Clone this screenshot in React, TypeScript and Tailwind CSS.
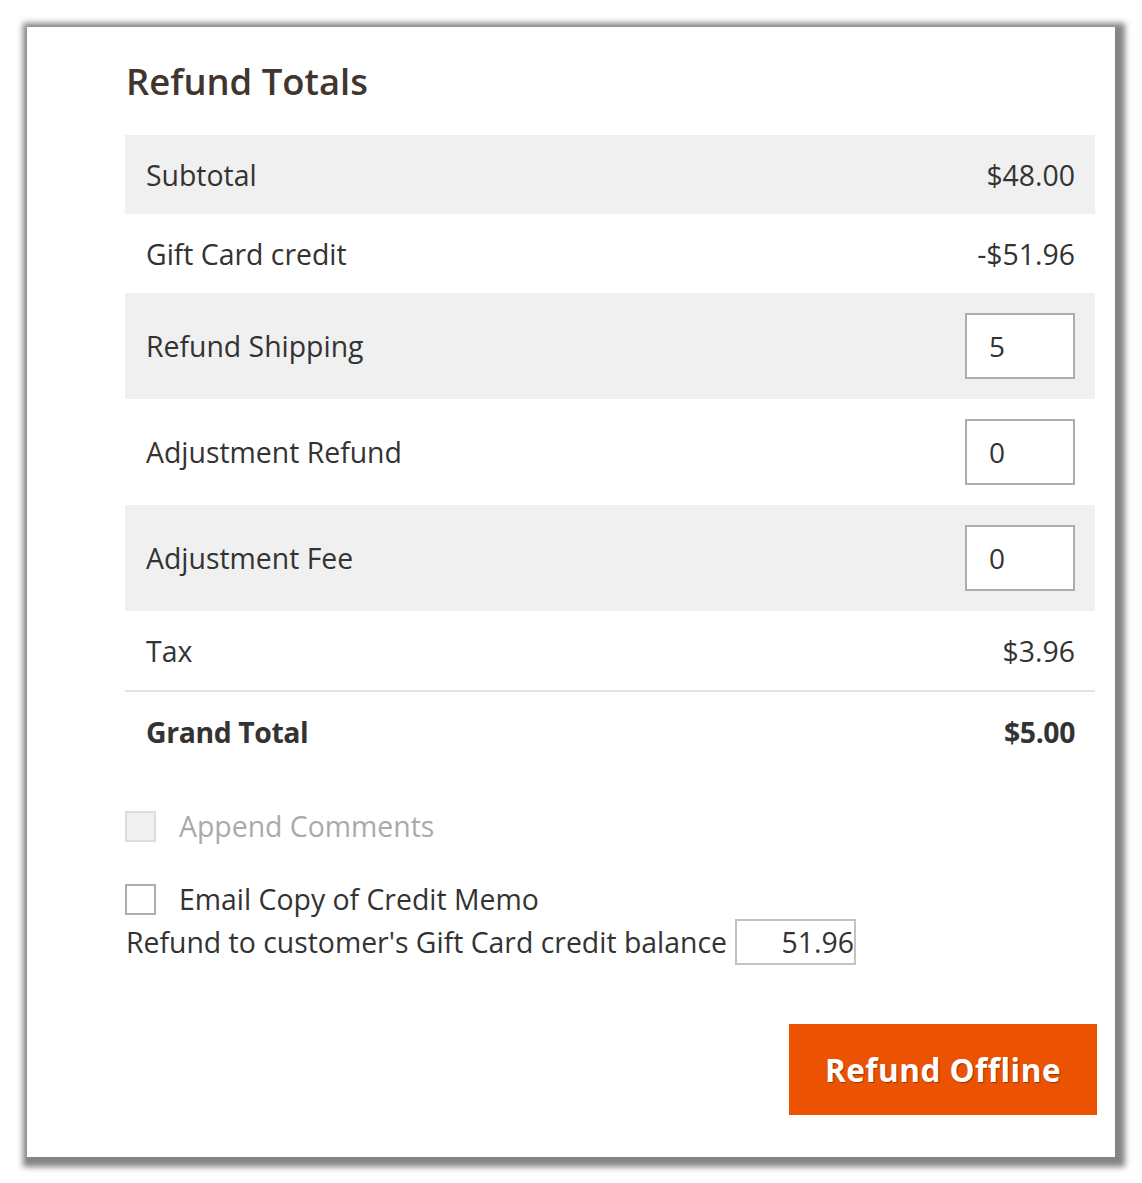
import React from "react";

const font = { fontFamily: '"Open Sans", "Noto Sans", sans-serif' };

function Row({
  label,
  value,
  shaded,
  input,
  tall,
}: {
  label: string;
  value: string;
  shaded?: boolean;
  input?: boolean;
  tall?: boolean;
}) {
  return (
    <div
      className={`flex items-center justify-between pl-[21px] pr-[20px] ${
        tall ? "h-[106px]" : "h-[79px]"
      } ${shaded ? "bg-[#f0f0f0]" : "bg-white"}`}
    >
      <span className="text-[28.4px] leading-[40px] text-[#333333]">{label}</span>
      {input ? (
        <input
          readOnly
          value={value}
          className="h-[66px] w-[110px] border-2 border-[#adadad] bg-white pl-[22px] text-[28px] text-[#333333] outline-none"
        />
      ) : (
        <span className="text-[28.4px] leading-[40px] text-[#333333]">{value}</span>
      )}
    </div>
  );
}

export default function App() {
  return (
    <div className="min-h-[1183px] w-[1142px] bg-white pt-[27px] pl-[27px]" style={font}>
      <div className="h-[1130px] w-[1088px] bg-white pl-[98px] pr-[20px] shadow-[3px_3px_6px_7px_rgba(110,110,110,0.85)]">
        <h2 className="pt-[30px] pl-[1px] text-[36.4px] font-semibold leading-[48px] text-[#41362f]">
          Refund Totals
        </h2>
        <div className="mt-[30px]">
          <Row label="Subtotal" value="$48.00" shaded />
          <Row label="Gift Card credit" value="-$51.96" />
          <Row label="Refund Shipping" value="5" shaded input tall />
          <Row label="Adjustment Refund" value="0" input tall />
          <Row label="Adjustment Fee" value="0" shaded input tall />
          <Row label="Tax" value="$3.96" />
          <div className="h-[2px] bg-[#e3e3e3]" />
          <div className="flex h-[79px] items-center justify-between pl-[21px] pr-[20px]">
            <span className="text-[28.4px] font-bold leading-[40px] tracking-[-0.4px] text-[#333333]">
              Grand Total
            </span>
            <span className="text-[28.4px] font-bold leading-[40px] tracking-[-0.4px] text-[#333333]">
              $5.00
            </span>
          </div>
        </div>

        <div className="mt-[35px] flex h-[40px] items-center gap-[23px]">
          <span className="h-[31px] w-[31px] border-2 border-[#dddddd] bg-[#f0f0f0]" />
          <span className="text-[28.4px] leading-[40px] text-[#aaaaaa]">Append Comments</span>
        </div>
        <div className="mt-[33px] flex h-[40px] items-center gap-[23px]">
          <span className="h-[31px] w-[31px] border-2 border-[#adadad] bg-white" />
          <span className="text-[28.4px] leading-[40px] text-[#333333]">Email Copy of Credit Memo</span>
        </div>
        <div className="flex items-center gap-[8px] pl-[1px]">
          <span className="text-[28.4px] leading-[40px] text-[#333333]">
            Refund to customer's Gift Card credit balance
          </span>
          <input
            readOnly
            value="51.96"
            className="h-[46px] w-[121px] border-2 border-[#c2c2c2] bg-white pr-0 text-right text-[28.4px] text-[#333333] outline-none"
          />
        </div>

        <div className="mr-[-2px] mt-[59px] flex justify-end">
          <button className="h-[91px] w-[308px] bg-[#eb5202] text-[31.5px] font-bold tracking-[0.5px] text-white [text-shadow:1px_1px_1px_rgba(0,0,0,0.35)]">
            Refund Offline
          </button>
        </div>
      </div>
    </div>
  );
}
